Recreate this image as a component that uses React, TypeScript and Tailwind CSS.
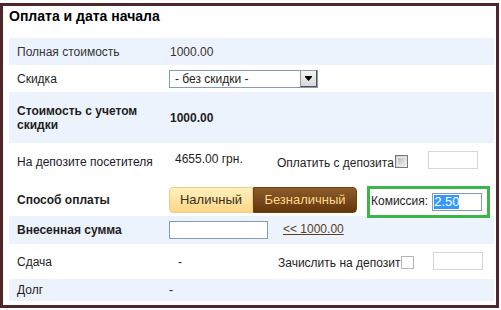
import React from "react";

const font = { fontFamily: '"Liberation Sans", Arial, sans-serif' };

function Checkbox({ light }: { light?: boolean }) {
  return (
    <div
      className={
        light
          ? "w-[13px] h-[13px] border border-[#b4b4b4] bg-white"
          : "w-[13px] h-[13px] border border-[#777] bg-gradient-to-br from-[#c8c8c8] to-[#f4f4f4] p-[1px]"
      }
    >
      {!light && <div className="w-full h-full border border-[#e8e8e8] bg-gradient-to-br from-[#bdbdbd] to-[#eeeeee]" />}
    </div>
  );
}

export default function App() {
  return (
    <div className="w-[501px] h-[310px] bg-white text-[12px] text-[#1e1e1e]" style={font}>
      <div className="mt-[3px] w-[499px] h-[305px] border-[3px] border-[#4e2828] pl-[6px] pr-[2px] flex flex-col">
        {/* title */}
        <div className="h-[32px] pt-[2px] pl-0">
          <div className="text-[14px] font-bold leading-[16px] text-black">Оплата и дата начала</div>
        </div>

        {/* Полная стоимость */}
        <div className="h-[27px] bg-[#edf3fd] flex items-center leading-[14px]">
          <div className="w-[160px] pl-[8px] text-[#333]">Полная стоимость</div>
          <div className="pl-[1px] text-[#3a3226]">1000.00</div>
        </div>

        {/* Скидка */}
        <div className="h-[27px] flex items-center leading-[14px]">
          <div className="w-[160px] pl-[8px]">Скидка</div>
          <div className="w-[149px] h-[18px] border border-[#7f9db9] bg-white flex items-center justify-between">
            <span className="pl-[5px] text-[#222]">- без скидки -</span>
            <div className="w-[17px] h-[17px] border border-t-[#9a9a9a] border-l-[#9a9a9a] border-r-[#555] border-b-[#555] bg-gradient-to-b from-[#f4f4f4] to-[#d8d8d8] flex items-center justify-center -mt-[1px] mr-0">
              <svg width="7" height="5" viewBox="0 0 7 5">
                <path d="M0 0 H7 V1 L3.5 5 L0 1 Z" fill="#000" />
              </svg>
            </div>
          </div>
        </div>

        {/* Стоимость с учетом скидки */}
        <div className="h-[51px] bg-[#edf3fd] flex items-center leading-[14px] font-bold">
          <div className="w-[160px] pl-[8px]">
            Стоимость с учетом
            <br />
            скидки
          </div>
          <div className="pl-[1px]">1000.00</div>
        </div>

        {/* На депозите */}
        <div className="h-[42px] flex items-start leading-[14px]">
          <div className="w-[160px] pl-[8px] mt-[12px] text-[#221a2c]">На депозите посетителя</div>
          <div className="w-[108px] pl-[6px] mt-[9px]">4655.00 грн.</div>
          <div className="mt-[13px]">Оплатить с депозита</div>
          <div className="mt-[12px] ml-[1px]">
            <Checkbox />
          </div>
          <div className="mt-[8px] ml-[20px] w-[50px] h-[18px] border border-[#d6d6d6] bg-white" />
        </div>

        {/* Способ оплаты */}
        <div className="h-[31px] flex items-start leading-[14px]">
          <div className="w-[160px] pl-[8px] mt-[8px] font-bold">Способ оплаты</div>
          <div className="mt-[2px] h-[26px] flex text-[13px]">
            <div className="w-[84px] h-full rounded-l-[4px] border border-[#f0cd7e] bg-gradient-to-b from-[#fff1bd] to-[#fbd685] flex items-center justify-center text-[#3c2d1c]">
              Наличный
            </div>
            <div className="w-[104px] h-full rounded-r-[4px] border border-[#6e4216] bg-gradient-to-b from-[#8c5c2c] to-[#643608] flex items-center justify-center text-[#fbd98c]">
              Безналичный
            </div>
          </div>
          <div className="relative z-10 mt-[1px] ml-[10px] w-[123px] h-[32px] border-[3px] border-[#3db54a] bg-white flex items-center">
            <span className="pl-[1px] -mt-[2px]">Комиссия:</span>
            <div className="ml-[4px] w-[50px] h-[18px] border border-[#7f9db9] bg-white flex items-center pl-[1px]">
              <span className="bg-[#3399ff] text-white text-[13px] leading-[14px] px-0">2.50</span>
            </div>
          </div>
        </div>

        {/* Внесенная сумма */}
        <div className="h-[28px] bg-[#edf3fd] flex items-center leading-[14px]">
          <div className="w-[160px] pl-[8px] font-bold">Внесенная сумма</div>
          <div className="w-[99px] h-[18px] border border-[#7f9db9] bg-white" />
          <span className="ml-[15px] -mt-[3px] text-[#5c3d1e] underline">&lt;&lt; 1000.00</span>
        </div>

        {/* Сдача */}
        <div className="h-[35px] flex items-start leading-[14px]">
          <div className="w-[160px] pl-[8px] mt-[11px]">Сдача</div>
          <div className="w-[109px] pl-[9px] mt-[11px]">-</div>
          <div className="mt-[12px]">Зачислить на депозит</div>
          <div className="mt-[12px] ml-[1px]">
            <Checkbox light />
          </div>
          <div className="mt-[8px] ml-[19px] w-[50px] h-[18px] border border-[#d6d6d6] bg-white" />
        </div>

        {/* Долг */}
        <div className="h-[22px] bg-[#edf3fd] flex items-center leading-[14px]">
          <div className="w-[160px] pl-[8px]">Долг</div>
          <div>-</div>
        </div>
      </div>
    </div>
  );
}
